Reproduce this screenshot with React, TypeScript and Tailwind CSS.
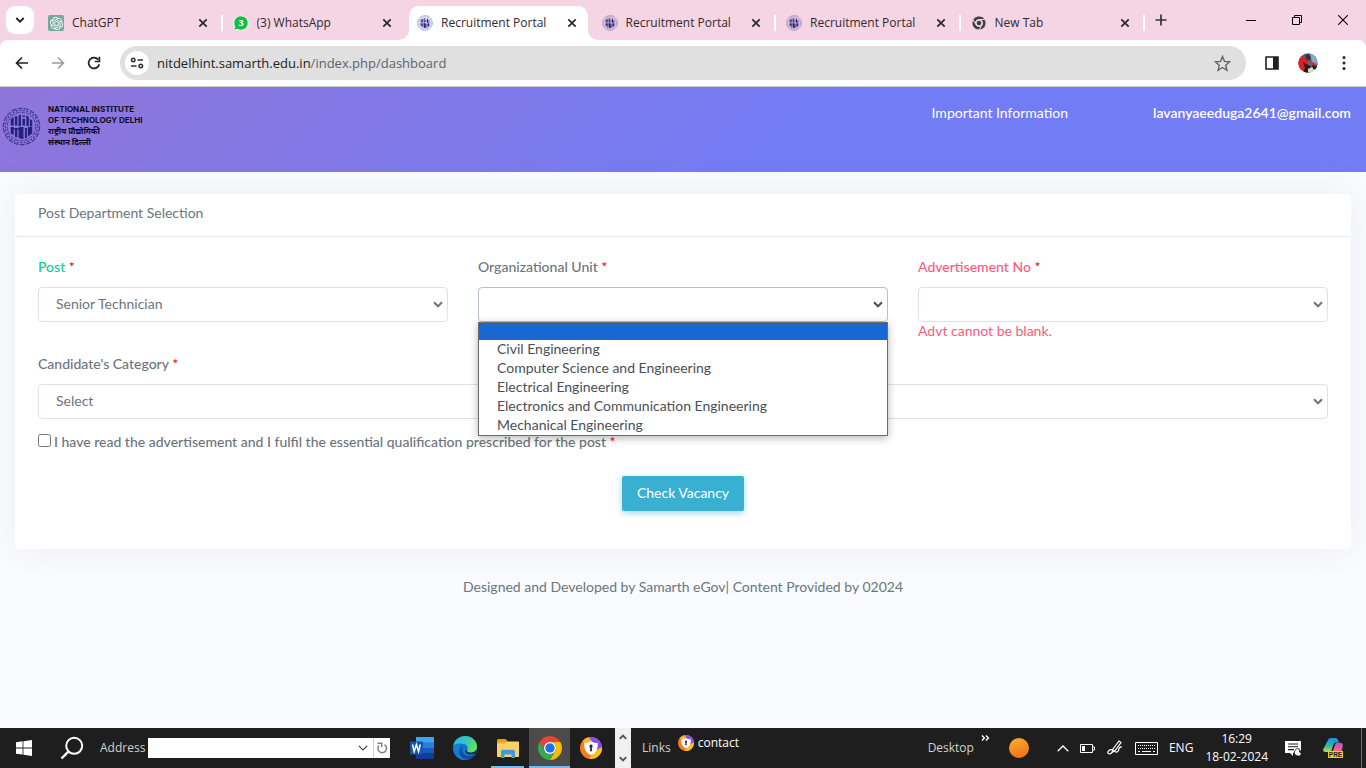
import type { ReactNode } from "react";
import { SiOpenai } from "react-icons/si";

const chromeFont = "font-['Open_Sans','Noto_Sans',sans-serif]";

function InstituteSeal({ className, ring = "#39398f" }: { className?: string; ring?: string }) {
  return (
    <svg viewBox="0 0 40 40" className={className} aria-hidden="true">
      <circle cx="20" cy="20" r="18.6" fill="none" stroke={ring} strokeWidth="1.2" strokeDasharray="5 1.4" />
      <circle cx="20" cy="20" r="16.6" fill="none" stroke={ring} strokeWidth="1.3" strokeDasharray="2 1.6" />
      <circle cx="20" cy="20" r="14.6" fill="none" stroke={ring} strokeWidth="1" strokeDasharray="4 1.2" />
      <g fill="#24217d">
        <path d="M9 12.5l3-2.5v9H9zM13.3 9.5h2.4v9.6h-2.4zM17 9l2.4-1.500v12H17zM21 12h2.6v7H21zM25 8.500l2.500 1.500v9.500H25zM28.600 12l2.400 2v6h-2.400z" />
        <path d="M9 20.500h3v8.500l-3-2zM13.300 21.500h2.400V31h-2.400zM17 20.500h5V33l-5-1.200zM23.500 21.500h2V32h-2zM26.500 20.500H31V27l-4.500 3.500z" />
      </g>
      <path d="M21 9.500h2.600M9 22.500h10" stroke="#24217d" strokeWidth="1.400" />
    </svg>
  );
}

function ChromeLogo({ className, mono = false }: { className?: string; mono?: boolean }) {
  const gap = mono ? "#f5d5e3" : "none";
  return (
    <svg viewBox="-24 -24 48 48" className={className} aria-hidden="true">
      <g stroke={gap} strokeWidth={mono ? 3 : 0}>
        <path fill={mono ? "#3c4043" : "#ea4335"} d="M0-12H20.780A24 24 0 0 0-20.780-12L-10.390 6A12 12 0 0 1 0-12z" />
        <path fill={mono ? "#3c4043" : "#fbbc04"} d="M20.780-12A24 24 0 0 1 0 24L10.390 6A12 12 0 0 0 0-12z" />
        <path fill={mono ? "#3c4043" : "#34a853"} d="M0 24A24 24 0 0 1-20.780-12L-10.390 6A12 12 0 0 0 10.390 6z" />
      </g>
      <circle r="12" fill={mono ? "#f5d5e3" : "#fff"} />
      <circle r={mono ? 8 : 9.500} fill={mono ? "#3c4043" : "#1a73e8"} />
    </svg>
  );
}

function ShieldBrowser({ className }: { className?: string }) {
  return (
    <svg viewBox="0 0 24 24" className={className} aria-hidden="true">
      <circle cx="12" cy="12" r="12" fill="#f47b20" />
      <path d="M7 1.100A12 12 0 0 1 24 11.500L18 14 12 4z" fill="#8450e8" />
      <path d="M24 11A12 12 0 0 1 10 23.800L15 16z" fill="#fbc21d" />
      <path d="M3 4.200A12 12 0 0 1 10 .2L13 5 5 8z" fill="#ffb52e" />
      <path d="M12 4.500c2.500 1.500 4.500 2 7.200 2 .6 6.500-1.500 11-7.200 13.200C6.300 17.500 4.200 13 4.800 6.500c2.700 0 4.700-.5 7.200-2z" fill="#fff" />
      <path d="M12 8.300a1.900 1.900 0 0 0-.9 3.500L10.800 15.500h2.400l-.3-3.700a1.900 1.900 0 0 0-.9-3.500z" fill="#2f2e45" />
    </svg>
  );
}

function WhatsAppBadge() {
  return (
    <svg viewBox="0 0 16 16" className="size-4" aria-hidden="true">
      <path d="M8 .8a7.200 7.200 0 1 1-3.500 13.500L.8 15.300l1-3.700A7.200 7.200 0 0 1 8 .8z" fill="#0cc143" stroke="#fff" strokeWidth=".8" />
      <text x="8" y="11.300" textAnchor="middle" fontSize="9" fontWeight="700" fill="#fff" fontFamily="Open Sans, sans-serif">3</text>
    </svg>
  );
}

function CloseX() {
  return (
    <svg viewBox="0 0 10 10" className="size-[10px]" aria-hidden="true">
      <path d="M1.300 1.300l7.400 7.400M8.700 1.300L1.300 8.700" stroke="#2b2529" strokeWidth="1.700" />
    </svg>
  );
}

function Tab({ icon, title, active = false, divider = false }: { icon: ReactNode; title: string; active?: boolean; divider?: boolean }) {
  return (
    <div className="flex min-w-0 flex-1 items-center">
      <div
        role="tab"
        aria-selected={active}
        className={
          active
            ? "relative flex h-[34px] min-w-0 flex-1 items-center gap-2 rounded-t-[10px] bg-white pr-[7px] pl-2"
            : "flex h-[34px] min-w-0 flex-1 items-center gap-2 pr-[7px] pl-2"
        }
      >
        {active && (
          <>
            <svg viewBox="0 0 10 10" className="absolute bottom-0 -left-[10px] size-[10px]" aria-hidden="true">
              <path d="M10 0v10H0A10 10 0 0 0 10 0z" fill="#fff" />
            </svg>
            <svg viewBox="0 0 10 10" className="absolute -right-[10px] bottom-0 size-[10px]" aria-hidden="true">
              <path d="M0 0v10h10A10 10 0 0 1 0 0z" fill="#fff" />
            </svg>
          </>
        )}
        <span className="flex size-4 shrink-0 items-center justify-center">{icon}</span>
        <span className="min-w-0 flex-1 truncate text-[12px] leading-4 text-[#2f2a2d]">{title}</span>
        <button type="button" aria-label={`Close ${title}`} className="flex size-[18px] shrink-0 items-center justify-center">
          <CloseX />
        </button>
      </div>
      <span className={divider ? "ml-[2px] mr-[2px] h-4 w-[2px] bg-white" : "ml-[2px] mr-[2px] h-4 w-[2px]"} />
    </div>
  );
}

function TabStrip() {
  const seal = <InstituteSeal className="size-4" ring="#6a5fb0" />;
  return (
    <div className="flex h-10 items-end bg-[#f5d5e3] pl-[6px]">
      <button type="button" aria-label="Search tabs" className="mb-[6px] flex size-7 shrink-0 items-center justify-center rounded-[9px] bg-white">
        <svg viewBox="0 0 10 10" className="size-[10px]" aria-hidden="true">
          <path d="M1.300 3L5 6.700 8.700 3" fill="none" stroke="#222" strokeWidth="1.800" />
        </svg>
      </button>
      <div role="tablist" className="ml-[6px] flex max-w-[1107px] min-w-0 flex-1">
        <Tab
          icon={
            <span className="flex size-4 items-center justify-center rounded-[2px] bg-[#75a99c] text-white">
              <SiOpenai size={13} />
            </span>
          }
          title="ChatGPT"
          divider
        />
        <Tab icon={<WhatsAppBadge />} title="(3) WhatsApp" />
        <Tab icon={seal} title="Recruitment Portal" active />
        <Tab icon={seal} title="Recruitment Portal" divider />
        <Tab icon={seal} title="Recruitment Portal" divider />
        <Tab icon={<ChromeLogo mono className="size-[14px]" />} title="New Tab" divider />
      </div>
      <button type="button" aria-label="New tab" className="mb-[6px] flex size-7 shrink-0 items-center justify-center">
        <svg viewBox="0 0 12 12" className="size-3" aria-hidden="true">
          <path d="M6 .5v11M.5 6h11" stroke="#333" strokeWidth="1.700" />
        </svg>
      </button>
      <div className="ml-auto flex h-10 shrink-0 items-center">
        <button type="button" aria-label="Minimize" className="flex h-10 w-[46px] items-center justify-center">
          <span className="h-px w-[10px] bg-black" />
        </button>
        <button type="button" aria-label="Restore" className="flex h-10 w-[46px] items-center justify-center">
          <svg viewBox="0 0 10 10" className="size-[10px]" aria-hidden="true">
            <path d="M.5 2.500h7v7h-7zM2.500 2.500v-2h7v7h-2" fill="none" stroke="#000" />
          </svg>
        </button>
        <button type="button" aria-label="Close window" className="flex h-10 w-[46px] items-center justify-center">
          <svg viewBox="0 0 10 10" className="size-[10px]" aria-hidden="true">
            <path d="M.2.2l9.600 9.600M9.800.2L.2 9.800" stroke="#000" strokeWidth="1.100" />
          </svg>
        </button>
      </div>
    </div>
  );
}

function Toolbar() {
  const button = "flex size-9 shrink-0 items-center justify-center";
  return (
    <div className="bg-[#f5d5e3]">
      <div className="flex h-[47px] items-center rounded-t-[8px] border-b border-[#c9cacd] bg-white px-1">
        <button type="button" aria-label="Back" className={button}>
          <svg viewBox="0 0 14 14" className="size-[14px]" aria-hidden="true">
            <path d="M13 7H2M7 1.500L1.500 7 7 12.500" fill="none" stroke="#202124" strokeWidth="1.700" />
          </svg>
        </button>
        <button type="button" aria-label="Forward" className={button}>
          <svg viewBox="0 0 14 14" className="size-[14px]" aria-hidden="true">
            <path d="M1 7h11M7 1.500L12.500 7 7 12.500" fill="none" stroke="#9a9a9a" strokeWidth="1.500" />
          </svg>
        </button>
        <button type="button" aria-label="Reload" className={button}>
          <svg viewBox="0 0 14 14" className="size-[14px]" aria-hidden="true">
            <path d="M12.300 8.200A5.400 5.400 0 1 1 11.200 3.600" fill="none" stroke="#202124" strokeWidth="1.700" />
            <path d="M12.400.8v4.700H7.700" fill="none" stroke="#202124" strokeWidth="1.700" />
          </svg>
        </button>
        <div className="mx-2 flex h-[34px] min-w-0 flex-1 items-center rounded-full bg-[#e0e0e0] pr-[7px] pl-[5px]">
          <button type="button" aria-label="View site information" className="flex size-6 shrink-0 items-center justify-center rounded-full bg-white">
            <svg viewBox="0 0 14 12" className="h-3 w-[14px]" fill="none" stroke="#333" strokeWidth="1.600" aria-hidden="true">
              <circle cx="3.200" cy="3" r="1.700" />
              <path d="M7.500 3H13M1 9h5.500" />
              <circle cx="10.800" cy="9" r="1.700" />
            </svg>
          </button>
          <a href="#dashboard" className="ml-2 min-w-0 flex-1 truncate text-[13px] leading-5 text-[#5f6368]">
            <span className="text-[#202124]">nitdelhint.samarth.edu.in</span>/index.php/dashboard
          </a>
          <button type="button" aria-label="Bookmark this tab" className="flex size-[34px] shrink-0 items-center justify-center">
            <svg viewBox="0 0 24 24" className="size-[19px]" aria-hidden="true">
              <path d="M12 3.300l2.500 6 6.500.6-4.900 4.300 1.500 6.300L12 17.100l-5.600 3.400 1.500-6.300L3 9.900l6.500-.6z" fill="none" stroke="#5f6368" strokeWidth="1.700" />
            </svg>
          </button>
        </div>
        <button type="button" aria-label="Side panel" className={button}>
          <svg viewBox="0 0 14 14" className="size-[14px]" aria-hidden="true">
            <path d="M1 1h12v12H1z" fill="#fff" stroke="#202124" strokeWidth="1.600" />
            <path d="M8 1h5v12H8z" fill="#202124" />
          </svg>
        </button>
        <button type="button" aria-label="Profile" className={button}>
          <svg viewBox="0 0 20 20" className="size-5" aria-hidden="true">
            <defs>
              <clipPath id="avatar-clip">
                <circle cx="10" cy="10" r="9.700" />
              </clipPath>
            </defs>
            <g clipPath="url(#avatar-clip)">
              <path d="M0 0h20v20H0z" fill="#3f6f9f" />
              <path d="M12 0h8v12l-6-3z" fill="#86a9c8" />
              <path d="M0 6l5-3 4 4 2 6-3 7H0z" fill="#e02020" />
              <path d="M7 2l4-1 2 4-2 3-3-2z" fill="#4a2b27" />
              <path d="M5 9l5 3 4 2-2 6H5l2-5z" fill="#231f28" />
              <path d="M12 7l4 3 3 1-2 3-5-3z" fill="#c63a2b" />
              <path d="M10 16l4-2 3 2-2 4h-5z" fill="#e8dcae" />
              <path d="M14 12l5 1-1 4-3-1z" fill="#1d2430" />
            </g>
          </svg>
        </button>
        <button type="button" aria-label="Browser menu" className={button}>
          <svg viewBox="0 0 4 16" className="h-4 w-1" fill="#202124" aria-hidden="true">
            <circle cx="2" cy="2.500" r="1.500" />
            <circle cx="2" cy="8" r="1.500" />
            <circle cx="2" cy="13.500" r="1.500" />
          </svg>
        </button>
      </div>
    </div>
  );
}

function SiteHeader() {
  return (
    <header className="flex h-[85px] items-start bg-[linear-gradient(135deg,#8f75da_0%,#727cf5_60%)]">
      <a href="#home" className="mt-[17px] ml-[2px] flex items-center gap-[7px]">
        <InstituteSeal className="size-[39px] shrink-0" />
        <span className="flex flex-col font-['Inter','Noto_Sans',sans-serif] text-[8px] leading-[11px] font-bold text-[#0c0a1c]">
          <span>NATIONAL INSTITUTE</span>
          <span>OF TECHNOLOGY DELHI</span>
          <span lang="hi">राष्ट्रीय प्रौद्योगिकी</span>
          <span lang="hi">संस्थान दिल्ली</span>
        </span>
      </a>
      <nav className="mt-4 mr-[15px] ml-auto flex gap-[85px] text-[14px] leading-[19px] text-white">
        <a href="#info">Important Information</a>
        <a href="#account" className="font-semibold">lavanyaeeduga2641@gmail.com</a>
      </nav>
    </header>
  );
}

const units = [
  "Civil Engineering",
  "Computer Science and Engineering",
  "Electrical Engineering",
  "Electronics and Communication Engineering",
  "Mechanical Engineering",
];

function Field({
  id,
  label,
  value = "",
  labelColor = "text-[#6c757d]",
  open = false,
  children,
}: {
  id: string;
  label: string;
  value?: string;
  labelColor?: string;
  open?: boolean;
  children?: ReactNode;
}) {
  return (
    <div className="min-w-0">
      <label htmlFor={id} className={`mb-[11px] block leading-[18px] font-medium ${labelColor}`}>
        {label} <span className="text-[#ff0000]">*</span>
      </label>
      <div className="relative">
        <select
          id={id}
          defaultValue={value}
          className={
            open
              ? "block h-[35px] w-full appearance-none rounded-[4px] border border-[#b9c0c8] bg-white pr-6 pb-[3px] pl-[17px] text-[#6c757d] outline-none"
              : "block h-[35px] w-full appearance-none rounded-[4px] border border-[#dee2e6] bg-white pr-6 pb-[3px] pl-[17px] text-[#6c757d] outline-none"
          }
        >
          <option value={value}>{value}</option>
        </select>
        <svg viewBox="0 0 10 7" className="pointer-events-none absolute top-[14px] right-[5px] h-[7px] w-[10px]" aria-hidden="true">
          <path d="M1 1.300l4 4 4-4" fill="none" stroke={open ? "#495057" : "#6c757d"} strokeWidth="2" />
        </svg>
        {open && (
          <ul role="listbox" aria-label={label} className="absolute top-full left-0 z-10 w-full border border-[#6b6b6b] bg-white text-[#495057] shadow-[0_2px_8px_rgba(0,0,0,0.3)]">
            <li role="option" aria-selected="true" className="h-[17px] bg-[#1967d2]" />
            {units.map((unit) => (
              <li key={unit} role="option" aria-selected="false" className="h-[19px] pl-[18px] leading-[18px]">
                {unit}
              </li>
            ))}
          </ul>
        )}
      </div>
      {children}
    </div>
  );
}

function SelectionCard() {
  return (
    <section className="mx-[15px] mt-[22px] rounded-[4px] bg-white shadow-[0_0_35px_rgba(154,161,171,0.15)]">
      <h1 className="border-b border-[#e3eaef] px-[23px] pt-[10px] pb-[14px] leading-[18px] text-[#6c757d]">Post Department Selection</h1>
      <form className="px-[23px] pt-[21px] pb-[38px]" onSubmit={(event) => event.preventDefault()}>
        <div className="grid grid-cols-3 gap-x-[30px]">
          <Field id="post" label="Post" value="Senior Technician" labelColor="text-[#0acf97]" />
          <Field id="unit" label="Organizational Unit" open />
          <Field id="advt" label="Advertisement No" labelColor="text-[#fa5c7c]">
            <p className="leading-[18px] text-[#fa5c7c]">Advt cannot be blank.</p>
          </Field>
        </div>
        <div className="mt-[15px]">
          <Field id="category" label="Candidate's Category" value="Select" />
        </div>
        <label className="mt-[14px] flex items-start gap-[3px] leading-[18px] font-medium text-[#6c757d]">
          <input type="checkbox" className="mt-px size-[13px] shrink-0" />
          <span>
            I have read the advertisement and I fulfil the essential qualification prescribed for the post <span className="text-[#ff0000]">*</span>
          </span>
        </label>
        <div className="mt-[25px] flex justify-center">
          <button type="submit" className="h-[35px] rounded-[2px] bg-[#39afd1] px-[15px] pb-[2px] text-white shadow-[0_2px_6px_rgba(57,175,209,0.5)]">
            Check Vacancy
          </button>
        </div>
      </form>
    </section>
  );
}

function Taskbar() {
  return (
    <div className={`flex h-10 items-center bg-[#1e1e1e] text-[12px] leading-4 text-[#e6e6e6] ${chromeFont}`}>
      <button type="button" aria-label="Start" className="flex h-10 w-12 shrink-0 items-center justify-center">
        <svg viewBox="0 0 16 16" className="size-4" fill="#fff" aria-hidden="true">
          <path d="M0 2.200l6.600-.9v6.200H0zM7.400 1.200L16 0v7.500H7.400zM0 8.400h6.600v6.200L0 13.700zM7.400 8.400H16V16l-8.600-1.200z" />
        </svg>
      </button>
      <button type="button" aria-label="Search" className="flex h-10 w-12 shrink-0 items-center justify-center">
        <svg viewBox="0 0 24 24" className="size-6" fill="none" stroke="#fff" strokeWidth="2" aria-hidden="true">
          <circle cx="14.200" cy="9.800" r="8" />
          <path d="M8.400 15.600L1.500 22.500" strokeWidth="2.400" />
        </svg>
      </button>
      <label htmlFor="address" className="ml-1 w-12 shrink-0 text-[#d2d2d2]">Address</label>
      <div className="flex h-5 shrink-0 items-center bg-white">
        <input id="address" type="text" className="h-5 w-[210px] bg-white px-1 text-black outline-none" />
        <button type="button" aria-label="Show addresses" className="flex h-5 w-[15px] items-center">
          <svg viewBox="0 0 10 6" className="h-[6px] w-[10px]" aria-hidden="true">
            <path d="M.8.800L5 5 9.200.8" fill="none" stroke="#444" strokeWidth="1.200" />
          </svg>
        </button>
        <button type="button" aria-label="Refresh" className="flex h-5 w-[17px] items-center justify-center border-l border-[#cfcfcf]">
          <svg viewBox="0 0 12 12" className="size-3" fill="none" stroke="#808080" strokeWidth="1.500" aria-hidden="true">
            <path d="M8.500 2.700A4.300 4.300 0 1 1 3 3.500M1.500 1.200h4.200v4" />
          </svg>
        </button>
      </div>
      <div className="ml-3 flex shrink-0 items-center">
        <button type="button" aria-label="Word" className="flex h-10 w-10 items-center justify-center">
          <svg viewBox="0 0 24 22" className="h-[22px] w-6" aria-hidden="true">
            <path d="M6 0h18v6H6z" fill="#41a5ee" />
            <path d="M6 5.500h18V11H6z" fill="#2b7cd3" />
            <path d="M6 11h18v5.500H6z" fill="#185abd" />
            <path d="M6 16.500h18V22H6z" fill="#103f91" />
            <path d="M0 4.500h13v13H0z" fill="#1b52ae" />
            <path d="M2.500 7.500l1.700 7 2.200-7 2.200 7 1.700-7" fill="none" stroke="#fff" strokeWidth="1.500" />
          </svg>
        </button>
        <button type="button" aria-label="Edge" className="ml-[3px] flex h-10 w-10 items-center justify-center">
          <svg viewBox="0 0 24 24" className="size-6" aria-hidden="true">
            <defs>
              <linearGradient id="edge-top" x1="0" y1="0" x2="1" y2=".5">
                <stop offset="0" stopColor="#2bb4e8" />
                <stop offset=".6" stopColor="#35c9b6" />
                <stop offset="1" stopColor="#6bdc5a" />
              </linearGradient>
            </defs>
            <circle cx="12" cy="12" r="12" fill="#1173cf" />
            <path d="M.3 9.500C1.800 3.500 6.500 0 12 0c7 0 12 5 12 10.500 0 3.500-2.700 6-6.200 6-3 0-4.300-1-3.600-2.100 1.400-2 .6-6.400-4.400-6.400C6 8 2 8 .3 9.500z" fill="url(#edge-top)" />
            <path d="M9.800 8C6 9 5.300 13 6.800 16.500 8.500 20.500 12 22.500 16 22.300c-1.500 1-3 1.700-4.500 1.700C5 23.800 0 18.500.1 11.500.5 8.500 5 6.500 9.800 8z" fill="#0f7fd6" />
            <path d="M9.800 10.500c-2 3.500-.5 8 3.700 9.200 3 .9 6.300 0 8.800-1.600-1.700 3-4.700 5-8 5.300-5.500-.2-9.500-5-7.500-10 .6-1.500 1.600-2.400 3-2.900z" fill="#0a4f9e" />
            <path d="M22.600 17.200c-3 1.500-6 1.500-8.300.2-2-1.200-2.300-2.500-1-4 0 2 2 3.300 4.600 3.300 2.500 0 4.700-1 5.700-3z" fill="#1e1e1e" />
          </svg>
        </button>
        <button type="button" aria-label="File Explorer" className="ml-[6px] flex h-10 w-[33px] items-center justify-center border-b-2 border-[#76b9ed] pt-[2px]">
          <svg viewBox="0 0 22 19" className="h-[19px] w-[22px]" aria-hidden="true">
            <path d="M0 1.500C0 .7.700 0 1.500 0h7L11 2.500h-11z" fill="#dd9f17" />
            <path d="M0 2.500h21c.6 0 1 .4 1 1V17c0 .6-.4 1-1 1H1c-.6 0-1-.4-1-1z" fill="#f9d263" />
            <path d="M0 2.500h10l-1.500 2H0z" fill="#e9b233" />
            <path d="M4 19v-6.500c0-1 .7-1.700 1.700-1.700h10.600c1 0 1.700.7 1.700 1.700V19h-3.500v-3.500h-7V19z" fill="#3f9be0" />
          </svg>
        </button>
        <button type="button" aria-label="Chrome" className="ml-[5px] flex h-10 w-[41px] items-center justify-center border-b-2 border-[#76b9ed] bg-[#4c4b4a] pt-[2px]">
          <ChromeLogo className="size-6" />
        </button>
        <button type="button" aria-label="Secure Browser" className="flex h-10 w-[41px] items-center justify-center">
          <ShieldBrowser className="size-[22px]" />
        </button>
      </div>
      <div className="ml-1 flex h-10 w-4 shrink-0 flex-col items-center justify-between bg-[#f0f0f0] py-[6px]">
        <button type="button" aria-label="Scroll up" className="flex">
          <svg viewBox="0 0 8 6" className="h-[6px] w-2" aria-hidden="true">
            <path d="M.8 4.800L4 1.600l3.200 3.200" fill="none" stroke="#505050" strokeWidth="1.800" />
          </svg>
        </button>
        <button type="button" aria-label="Scroll down" className="flex">
          <svg viewBox="0 0 8 6" className="h-[6px] w-2" aria-hidden="true">
            <path d="M.8 1.200L4 4.400l3.200-3.200" fill="none" stroke="#505050" strokeWidth="1.800" />
          </svg>
        </button>
      </div>
      <span className="ml-[11px] shrink-0 text-[#d2d2d2]">Links</span>
      <a href="#contact" className="mb-[10px] ml-[7px] flex shrink-0 items-center gap-1 text-white">
        <ShieldBrowser className="size-4" />
        <span>contact</span>
      </a>
      <div className="ml-auto flex h-10 shrink-0 items-center">
        <span className="text-[#d2d2d2]">Desktop</span>
        <button type="button" aria-label="More desktop items" className="mb-5 ml-[7px] flex">
          <svg viewBox="0 0 9 6" className="h-[6px] w-[9px]" aria-hidden="true">
            <path d="M1 .6L3.400 3 1 5.400M5 .6L7.400 3 5 5.400" fill="none" stroke="#fff" strokeWidth="1.400" />
          </svg>
        </button>
        <span className="ml-[19px] size-5 rounded-full bg-[linear-gradient(160deg,#f8b133,#f26a10)]" />
        <svg viewBox="0 0 12 7" className="ml-7 h-[7px] w-3" aria-hidden="true">
          <path d="M.7 6.300L6 1l5.300 5.300" fill="none" stroke="#fff" strokeWidth="1.300" />
        </svg>
        <svg viewBox="0 0 15 9" className="ml-[11px] h-[9px] w-[15px]" aria-hidden="true">
          <path d="M.5.500h12v8H.5zM12.500 3h2v3h-2" fill="none" stroke="#fff" />
          <path d="M2 2h3v5H2z" fill="#fff" />
        </svg>
        <svg viewBox="0 0 16 16" className="ml-3 size-4" fill="none" stroke="#fff" strokeWidth="1.200" aria-hidden="true">
          <path d="M5 12.500L6 9l6-8 2 1.500-6 8zM5 12.500c-3 3-5.500.5-3.500-1.500s4-1.500 6 .2 3.500.8 4-1 .5-3.700 3.500-3.200" />
        </svg>
        <svg viewBox="0 0 23 13" className="ml-3 h-[13px] w-[23px]" fill="none" stroke="#fff" aria-hidden="true">
          <path d="M.5.500h22v12H.5z" />
          <path d="M3 3.500h17M3 6.500h17" strokeDasharray="1 1" />
          <path d="M3 9.500h2M7 9.500h9M18 9.500h2" />
        </svg>
        <span className="ml-[11px] text-white">ENG</span>
        <span className="ml-3 flex flex-col items-center leading-[18px] text-white">
          <span>16:29</span>
          <span>18-02-2024</span>
        </span>
        <svg viewBox="0 0 17 17" className="ml-[17px] size-[17px]" aria-hidden="true">
          <path d="M0 1h16v9.500h-4L8 13v3l-3-3H0z" fill="#fff" />
          <path d="M3 4h10M3 6.800h10M3 9.600h6" stroke="#1e1e1e" strokeWidth="1.100" />
          <path d="M14.500 9a3.600 3.600 0 1 0 2 4.500A3.300 3.300 0 0 1 14.500 9z" fill="#fff" stroke="#1e1e1e" strokeWidth=".8" />
        </svg>
        <svg viewBox="0 0 20 20" className="ml-[21px] size-5" aria-hidden="true">
          <defs>
            <linearGradient id="copilot-left" x1="0" y1="0" x2="0" y2="1">
              <stop offset="0" stopColor="#168df0" />
              <stop offset=".6" stopColor="#30bfa3" />
              <stop offset="1" stopColor="#d9d43a" />
            </linearGradient>
            <linearGradient id="copilot-right" x1="0" y1="0" x2="0" y2="1">
              <stop offset="0" stopColor="#a45cf0" />
              <stop offset=".6" stopColor="#f0559a" />
              <stop offset="1" stopColor="#fb8a3c" />
            </linearGradient>
          </defs>
          <path d="M5 2C5.600.6 6.500 0 8 0h4.500c1.500 0 2 .8 2.500 2l.8 2.500h-3c-1.500 0-2 .8-2.500 2.200L8.500 12.500c-.5 1.300-1.200 1.500-2.500 1.500H2.500C.5 14-.3 12.800.3 11z" fill="url(#copilot-left)" />
          <path d="M12 7c.5-1.500 1-2.200 2.500-2.200h2.700c2 0 3 1.200 2.600 3.200L18.500 14H9.500z" fill="url(#copilot-right)" />
          <path d="M5 13h15v7H5z" fill="#ffc82c" />
          <text x="12.500" y="18.800" textAnchor="middle" fontSize="6.500" fontWeight="700" fill="#1e1e1e" fontFamily="Liberation Sans, sans-serif">PRE</text>
        </svg>
        <span className="ml-[18px] mr-1 h-10 w-px bg-[#6e6e6e]" />
      </div>
    </div>
  );
}

export default function App() {
  return (
    <div className="flex min-h-screen flex-col bg-[#fafbfe] font-['Lato','Noto_Sans',sans-serif] text-[14px]">
      <div className={chromeFont}>
        <TabStrip />
        <Toolbar />
      </div>
      <main className="flex-1">
        <SiteHeader />
        <SelectionCard />
        <footer className="mt-[29px] text-center leading-[18px] text-[#6c757d]">
          Designed and Developed by Samarth eGov| Content Provided by 02024
        </footer>
      </main>
      <Taskbar />
    </div>
  );
}
